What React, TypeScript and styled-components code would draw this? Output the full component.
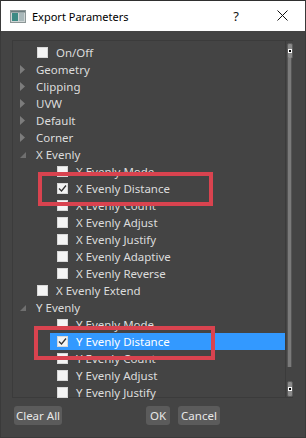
import React, { FC } from 'react';
import styled, { createGlobalStyle } from 'styled-components';

const GlobalStyle = createGlobalStyle`
  html, body {
    margin: 0;
    padding: 0;
    background: #444444;
  }
  * {
    box-sizing: border-box;
  }
`;

const Window = styled.div`
  width: 306px;
  height: 438px;
  background-color: #444444;
  border: 1px solid #3a3a3a;
  border-top-color: #2f2f2f;
  display: flex;
  flex-direction: column;
  font-family: "Noto Sans", "Open Sans", sans-serif;
  font-size: 11.5px;
  overflow: hidden;
`;

const TitleBar = styled.div`
  height: 30px;
  background-color: #ffffff;
  display: flex;
  align-items: center;
  padding-left: 9px;
  color: #000000;
  flex-shrink: 0;
`;

const TitleText = styled.span`
  margin-left: 6px;
  font-size: 11px;
  flex: 1;
`;

const TitleButton = styled.span`
  width: 46px;
  text-align: center;
  font-size: 13px;
  color: #111111;
`;

const Body = styled.div`
  flex: 1;
  display: flex;
  flex-direction: column;
  padding: 9px 12px 0 11px;
`;

const TreeFrame = styled.div`
  position: relative;
  height: 358px;
  border: 1px solid #3b3b3b;
  border-right: none;
  display: flex;
`;

const RowList = styled.div`
  flex: 1;
  padding-top: 3px;
  border-right: 1px solid #3b3b3b;
`;

const Row = styled.div`
  height: 17px;
  line-height: 15px;
  display: flex;
  align-items: stretch;
  color: #dcdcdc;
`;

const Gutter = styled.div<{ $depth: number }>`
  width: ${p => 17 + p.$depth * 20}px;
  flex-shrink: 0;
  display: flex;
  align-items: center;
  padding-left: 7px;
`;

const RowBody = styled.div<{ $selected?: boolean }>`
  flex: 1;
  display: flex;
  align-items: center;
  padding-left: 6px;
  background-color: ${p => (p.$selected ? '#3399ff' : 'transparent')};
  color: ${p => (p.$selected ? '#ffffff' : '#dcdcdc')};
  white-space: nowrap;
`;

const Check = styled.span`
  width: 11px;
  height: 11px;
  margin-left: 1px;
  margin-right: 8px;
  background-color: #f4f4f4;
  border: 1px solid #d8d8d8;
  display: flex;
  align-items: center;
  justify-content: center;
  flex-shrink: 0;
`;

const ScrollBar = styled.div`
  width: 7px;
  position: relative;
  display: flex;
  flex-direction: column;
  padding: 2px 0 0 1px;
`;

const Track = styled.div`
  flex: 1;
  width: 5px;
  background-color: #7a7a7a;
  border-left: 1px solid #555555;
  border-right: 1px solid #555555;
  margin: -1px 0 14px 0;
`;

const Thumb = styled.div`
  width: 6px;
  height: 16px;
  background-color: #8a8a8a;
  border: 1px solid #5c5c5c;
  border-radius: 2px;
  display: flex;
  align-items: center;
  justify-content: center;
  flex-shrink: 0;
  &::after {
    content: '';
    width: 2px;
    height: 2px;
    background: #000;
    box-shadow: 0 0 0 1px #fff;
  }
`;

const Highlight = styled.div`
  position: absolute;
  border: 4px solid #d9434f;
  pointer-events: none;
`;

const ButtonBar = styled.div`
  display: flex;
  align-items: center;
  padding-top: 8px;
  padding-left: 2px;
`;

const Button = styled.div<{ $ml?: number; $w: number }>`
  height: 19px;
  width: ${p => p.$w}px;
  margin-left: ${p => p.$ml || 0}px;
  background-color: #5b5b5b;
  border-radius: 3px;
  color: #e8e8e8;
  font-size: 11.5px;
  display: flex;
  align-items: center;
  justify-content: center;
  white-space: nowrap;
`;

const Arrow: FC<{ open?: boolean }> = ({ open }) =>
  open ? (
    <svg width="6" height="6" viewBox="0 0 6 6">
      <polygon points="6,0 6,6 0,6" fill="#6f6f6f" />
    </svg>
  ) : (
    <svg width="5" height="9" viewBox="0 0 5 9">
      <polygon points="0,0 5,4.5 0,9" fill="#7c7c7c" />
    </svg>
  );

const CheckMark = () => (
  <svg width="9" height="9" viewBox="0 0 9 9">
    <polyline points="1,4.5 3.5,7 8,1.5" fill="none" stroke="#333" strokeWidth="1.3" />
  </svg>
);

const AppIcon = () => (
  <svg width="16" height="13" viewBox="0 0 16 13">
    <rect x="0.5" y="0.5" width="15" height="12" fill="#cfd6d6" stroke="#8c9696" />
    <rect x="2" y="3" width="6" height="8" fill="#3d8a84" />
    <rect x="9" y="3" width="5" height="8" fill="#a9b8ba" />
    <rect x="1" y="1" width="14" height="1.5" fill="#6b7c7e" />
  </svg>
);

type Item = {
  label: string;
  depth: number;
  kind: 'branch' | 'open' | 'check';
  checked?: boolean;
  selected?: boolean;
};

const xs = ['Mode', 'Distance', 'Count', 'Adjust', 'Justify', 'Adaptive', 'Reverse'];

const items: Item[] = [
  { label: 'On/Off', depth: 0, kind: 'check' },
  { label: 'Geometry', depth: 0, kind: 'branch' },
  { label: 'Clipping', depth: 0, kind: 'branch' },
  { label: 'UVW', depth: 0, kind: 'branch' },
  { label: 'Default', depth: 0, kind: 'branch' },
  { label: 'Corner', depth: 0, kind: 'branch' },
  { label: 'X Evenly', depth: 0, kind: 'open' },
  ...xs.map(s => ({ label: 'X Evenly ' + s, depth: 1, kind: 'check' as const, checked: s === 'Distance' })),
  { label: 'X Evenly Extend', depth: 0, kind: 'check' },
  { label: 'Y Evenly', depth: 0, kind: 'open' },
  ...xs.slice(0, 5).map(s => ({
    label: 'Y Evenly ' + s,
    depth: 1,
    kind: 'check' as const,
    checked: s === 'Distance',
    selected: s === 'Distance',
  })),
];

const App: FC = () => {
  return (
    <Window>
      <GlobalStyle />
      <TitleBar>
        <AppIcon />
        <TitleText>Export Parameters</TitleText>
        <TitleButton>?</TitleButton>
        <TitleButton>
          <svg width="11" height="11" viewBox="0 0 11 11">
            <path d="M0.5 0.5 L10.5 10.5 M10.5 0.5 L0.5 10.5" stroke="#111" strokeWidth="1" />
          </svg>
        </TitleButton>
      </TitleBar>
      <Body>
        <TreeFrame>
          <RowList>
            {items.map(it => (
              <Row key={it.label}>
                <Gutter $depth={it.depth}>
                  {it.kind === 'branch' && <Arrow />}
                  {it.kind === 'open' && <Arrow open />}
                </Gutter>
                <RowBody $selected={it.selected}>
                  {it.kind === 'check' && <Check>{it.checked && <CheckMark />}</Check>}
                  {it.label}
                </RowBody>
              </Row>
            ))}
          </RowList>
          <ScrollBar>
            <Thumb />
            <Track />
            <Thumb />
          </ScrollBar>
          <Highlight style={{ left: 25, top: 131, width: 175, height: 34 }} />
          <Highlight style={{ left: 21, top: 285, width: 181, height: 34 }} />
        </TreeFrame>
        <ButtonBar>
          <Button $w={48}>Clear All</Button>
          <Button $w={24} $ml={84}>OK</Button>
          <Button $w={42} $ml={8}>Cancel</Button>
        </ButtonBar>
      </Body>
    </Window>
  );
};

export default App;
